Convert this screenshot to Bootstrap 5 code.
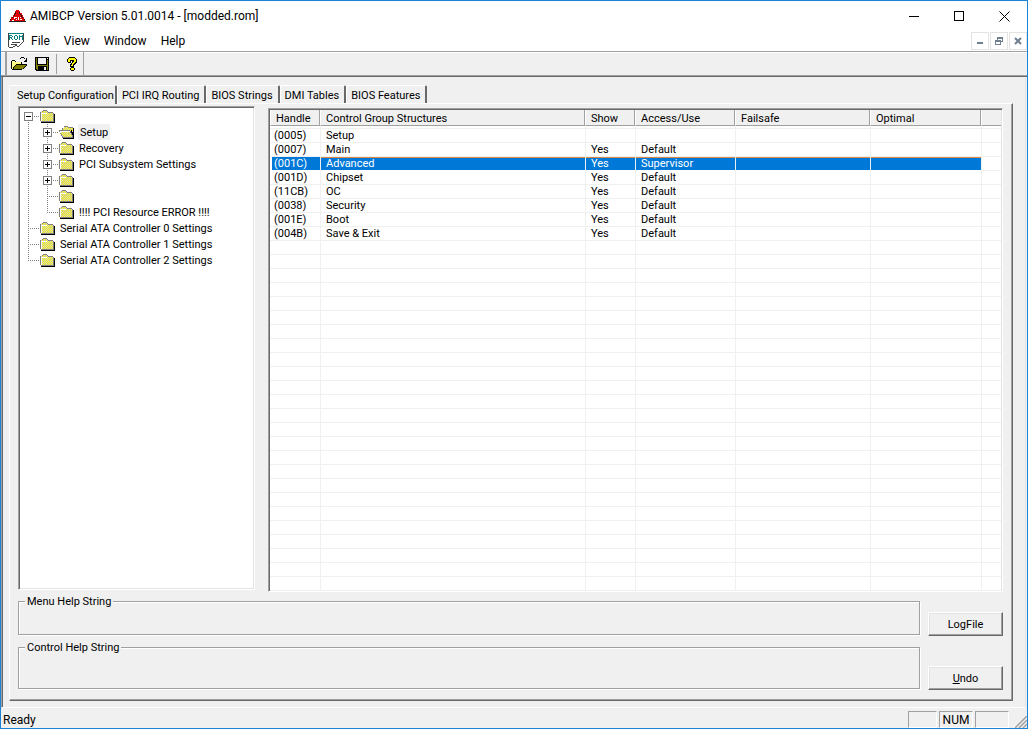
<!DOCTYPE html>
<html lang="en">
<head>
<meta charset="utf-8">
<meta name="viewport" content="width=device-width, initial-scale=1">
<title>AMIBCP Version 5.01.0014 - [modded.rom]</title>
<link href="https://cdn.jsdelivr.net/npm/bootstrap@5.3.0/dist/css/bootstrap.min.css" rel="stylesheet">
<style>
  :root { --face: #f0f0f0; --shade: #a0a0a0; --dark: #696969; --lite: #e3e3e3; --accent: #0078d7; }
  body { font: 11px/14px Roboto, "Liberation Sans", sans-serif; color: #000; background: var(--face); }
  button { font: inherit; color: inherit; }
  svg { display: block; flex: none; }
  .window { height: 100vh; border: 1px solid #1883d7; }
  .ui-text { font: 12px/16px Roboto, "Segoe UI", sans-serif; }

  .title-bar { height: 30px; background: #fff; padding-left: 8px; }
  .title-bar h1 { font: inherit; margin: 0 0 0 4px; }
  .caption-btn { width: 45px; height: 30px; border: 0; background: none; padding: 0; display: grid; place-items: center; }
  .menu-bar { height: 20px; background: #fff; padding-left: 7px; }
  .menu-bar .nav-link { color: #000; padding: 0 7px; }
  .child-btns { gap: 1px; }
  .child-btn { width: 18px; height: 18px; border: 1px solid var(--lite); background: #fff; padding: 0; display: grid; place-items: center; }
  .tool-bar { height: 26px; border-top: 1px solid var(--shade); border-bottom: 1px solid var(--dark); box-shadow: inset 0 1px #fff, inset 0 -1px var(--shade); padding-left: 4px; }
  .tool-group { height: 23px; border-left: 2px solid var(--shade); border-right: 1px solid var(--shade); vertical-align: top; }
  .tool-btn { width: 23px; height: 22px; border: 0; background: none; padding: 0; display: grid; place-items: center; }
  .tool-sep { width: 1px; height: 20px; background: var(--shade); margin: 0 3px; }

  .client { min-height: 0; margin-right: 1px; border-left: 1px solid var(--shade); border-right: 1px solid var(--lite); border-bottom: 1px solid #fff; box-shadow: inset 1px 0 var(--dark); padding: 8px 12px 6px 7px; }
  .sheet-tabs { border: 0; gap: 0; align-items: flex-end; }
  .sheet-tabs .nav-link { color: #000; border: 1px solid #fff; border-right: 2px solid var(--dark); border-bottom: 0; border-radius: 2px 2px 0 0; background: var(--face); height: 18px; padding: 3px 5px 0 4px; margin: 0; line-height: 14px; white-space: nowrap; }
  .sheet-tabs .nav-link.active { color: #000; background: var(--face); border-color: #fff var(--dark) #fff #fff; height: 19px; padding: 1px 1px 0 7px; margin-bottom: -1px; position: relative; }
  .sheet { border: 1px solid; border-color: #fff var(--dark) var(--dark) #fff; box-shadow: inset -1px -1px var(--shade); padding: 2px 9px 10px 8px; min-height: 0; }
  .panes { flex: 1 1 0; min-height: 0; gap: 13px; }
  .sunken { background: #fff; border: 1px solid; border-color: var(--shade) #fff #fff var(--shade); box-shadow: inset 1px 1px var(--dark), inset -1px -1px var(--lite); padding: 1px; min-height: 0; overflow: hidden; }
  .tree-pane { flex: 0 0 237px; margin-bottom: 2px; }
  .list-pane { flex: 1 1 0; margin-top: 2px; }
  .tree { margin: 0; padding: 0; list-style: none; }
  .node { display: flex; height: 16px; align-items: center; white-space: nowrap; }
  .node .folder { margin-left: 1px; }
  .node .name { margin-left: 3px; padding: 2px 2px 0; }
  .node .name.current { background: var(--face); }

  .groups { table-layout: fixed; width: 100%; margin: 0; border-collapse: separate; border-spacing: 0; line-height: 12px; }
  .groups th { font-weight: 400; height: 16px; padding: 3px 5px 0; background: var(--face); border: 0; border-right: 1px solid var(--shade); border-bottom: 1px solid var(--shade); border-left: 1px solid #fff; white-space: nowrap; }
  .groups th:last-child { border-right: 0; }
  .groups td { height: 14px; padding: 1px 5px 0; border: 0; border-bottom: 1px solid #f0f0f0; border-left: 1px solid #f0f0f0; white-space: nowrap; overflow: hidden; }
  .groups td:first-child { border-left: 0; padding: 1px 4px 0; }
  .groups .gap td { height: 3px; line-height: 2px; padding: 0; }
  .groups .chosen td:not(:last-child) { background: var(--accent); color: #fff; border-bottom-color: #fff; box-shadow: inset 0 1px #d98a48; }
  .groups .chosen td:first-child { background: linear-gradient(90deg, #fff 2px, var(--accent) 2px); box-shadow: none; }

  .lower { gap: 8px; }
  .help-stack { gap: 4px; padding: 1px 0; }
  .help-box { border: 1px solid var(--shade); box-shadow: 1px 1px #fff, inset 1px 1px #fff; margin: 0; padding: 0 6px; min-width: 0; }
  .help-box legend { float: none; width: auto; font: inherit; margin: 0; padding: 2px 2px 0; background: var(--face); }
  .box-menu { height: 42px; }
  .box-control { height: 50px; }
  .push-stack { padding-top: 20px; }
  .push { width: 75px; height: 24px; padding: 1px 0 0; background: var(--face); border: 1px solid; border-color: #fff var(--dark) var(--dark) #fff; box-shadow: inset -1px -1px var(--shade), inset 1px 1px var(--lite); }
  .status-bar { height: 20px; padding: 3px 0 0 2px; }
  .cell { width: 34px; height: 17px; border: 1px solid; border-color: var(--shade) #fff #fff var(--shade); margin-right: 2px; }
  .cell.short { width: 29px; }
</style>
</head>
<body>
<svg width="0" height="0" class="position-absolute" aria-hidden="true">
  <defs>
    <pattern id="dither" width="2" height="2" patternUnits="userSpaceOnUse"><path fill="#c8c8c8" d="M0 0h2v2H0z"/><path fill="#ff0" d="M0 0h1v1H0zM1 1h1v1H1z"/></pattern>
    <pattern id="dither-open" width="2" height="2" patternUnits="userSpaceOnUse"><path fill="#ff0" d="M0 0h2v2H0z"/><path fill="#c8c8c8" d="M0 0h1v1H0zM1 1h1v1H1z"/></pattern>
    <symbol id="folder" viewBox="0 0 15 13"><path fill="url(#dither)" d="M1 2h2V1h4v1h1v1h5v8H1z"/><path fill="#808080" d="M2 1h1V0h4v1h1v1h5v1H8V2H7V1H3v1H1v9H0V2h2zM1 11h12V3h1v9H1z"/><path fill="#fff" d="M1 3h6v1H2v7H1z"/><path d="M14 4h1v9H1v-1h13z"/></symbol>
    <symbol id="open" viewBox="0 0 16 13"><path fill="url(#dither-open)" d="M4 2h1V1h4v1h5v9H4zM1 5h11v2h1v2h1v2H3V9H2V7H1z"/><path fill="#808080" d="M5 0h4v1h5v1H9V1H5v1H4v2H3V2h2zM0 4h11v1h1v2h1v2h1v2h-1V9h-1V7h-1V5H1v1H0zM1 6h1v2H1zM2 8h1v2H2zM3 10h1v1h10v1H3z"/><path fill="#fff" d="M1 5h10v1H2v1H1z"/><path d="M14 2h1v11H4v-1h10zM12 4h1v2h1v3h-1V7h-1z"/></symbol>
    <symbol id="v" viewBox="0 0 19 16"><path fill="none" stroke="#808080" stroke-dasharray="1 1" d="M8.500 0v16"/></symbol>
    <symbol id="tee" viewBox="0 0 19 16"><path fill="none" stroke="#808080" stroke-dasharray="1 1" d="M8.500 0v16M8 8.500h11"/></symbol>
    <symbol id="ell" viewBox="0 0 19 16"><path fill="none" stroke="#808080" stroke-dasharray="1 1" d="M8.500 0v8M8 8.500h11"/></symbol>
    <symbol id="plus" viewBox="0 0 19 16"><path fill="none" stroke="#808080" stroke-dasharray="1 1" d="M8.500 0v16M8 8.500h11"/><path fill="#fff" stroke="#808080" d="M4.500 4.500h8v8h-8z"/><path d="M6 8h5v1H6zM8 6h1v5H8z"/></symbol>
    <symbol id="minus" viewBox="0 0 19 16"><path fill="none" stroke="#808080" stroke-dasharray="1 1" d="M8.500 12v4M12 8.500h7"/><path fill="#fff" stroke="#808080" d="M4.500 4.500h8v8h-8z"/><path d="M6 8h5v1H6z"/></symbol>
  </defs>
</svg>

<div class="window d-flex flex-column">
  <header>
    <div class="title-bar ui-text d-flex align-items-center">
      <svg width="17" height="14" viewBox="0 0 17 14" shape-rendering="crispEdges"><path fill="#e00000" d="M7 1h3v1h1v2h2v2h1v2h1v2h1v2H1v-2h1V8h2V6h1V4h1V2h1z"/><path fill="#222" d="M6 3h1v2H6zM5 5h1v2H5zM10 3h1v2h1v1h-1zM12 6h1v2h1v1h-1zM3 8h1v1H3zM0 12h17v1H0zM1 10h1v1H1zM15 10h1v1h-1z"/><path fill="#fff" d="M5 8h3v1H6v1H5zM9 8h1v3H9zM7 10h1v1H7zM3 11h2v1H3zM11 8h1v1h-1zM11 10h2v1h-2z"/></svg>
      <h1 class="me-auto text-nowrap">AMIBCP Version 5.01.0014 - [modded.rom]</h1>
      <button class="caption-btn" aria-label="Minimize"><svg width="11" height="11" shape-rendering="crispEdges"><path d="M0 5h10v1H0z"/></svg></button>
      <button class="caption-btn" aria-label="Maximize"><svg width="11" height="11" shape-rendering="crispEdges"><path fill="none" stroke="#000" d="M.5.5h9v9h-9z"/></svg></button>
      <button class="caption-btn" aria-label="Close"><svg width="11" height="11"><path fill="none" stroke="#000" d="M.5.5l10 10M10.500.5l-10 10"/></svg></button>
    </div>
    <nav class="menu-bar ui-text d-flex align-items-center" aria-label="Menu">
      <svg width="16" height="16" viewBox="0 0 16 16" shape-rendering="crispEdges"><path fill="#fff" d="M0 0h16v9l-4 5H0z"/><path fill="#008080" d="M0 0h16v1H0zM1 2h3v1H2v1h2v1H2v2H1zM4 3h1v1H4zM3 5h1v1H3zM4 6h1v1H4zM6 3h1v3H6zM7 2h2v1H7zM9 3h1v3H9zM7 6h2v1H7zM11 2h1v5h-1zM12 3h1v1h-1zM13 3h1v1h-1zM14 2h1v5h-1z"/><path fill="#444" d="M0 0h1v14H0zM15 0h1v9h-1zM4 9h8v1H4zM3 11h6v1H3zM14 9h1v1h-1zM13 10h1v1h-1zM12 11h1v1h-1zM11 12h1v1h-1zM9 13h2v1H9zM7 12h2v1H7zM5 13h2v1H5zM1 14h4v1H1z"/></svg>
      <div class="nav me-auto">
        <a class="nav-link" href="#">File</a><a class="nav-link" href="#">View</a><a class="nav-link" href="#">Window</a><a class="nav-link" href="#">Help</a>
      </div>
      <div class="child-btns d-flex">
        <button class="child-btn" aria-label="Minimize document"><svg width="8" height="8"><path fill="#708090" d="M1 5h6v2H1z"/></svg></button>
        <button class="child-btn" aria-label="Restore document"><svg width="8" height="8" shape-rendering="crispEdges"><path fill="none" stroke="#708090" d="M2.500 3V.5h5v4H6M.5 3.500h5v4h-5z"/><path fill="#708090" d="M2 0h6v2H2zM0 3h6v2H0z"/></svg></button>
        <button class="child-btn" aria-label="Close document"><svg width="8" height="8"><path fill="none" stroke="#708090" stroke-width="2" d="M1 1l6 6M7 1L1 7"/></svg></button>
      </div>
    </nav>
    <div class="tool-bar">
      <div class="tool-group d-inline-flex align-items-center">
        <button class="tool-btn" aria-label="Open"><svg width="16" height="14" viewBox="0 0 16 14" shape-rendering="crispEdges"><path fill="#ff8" d="M1 4h4v1h6v3H5v1H4v1H3v1H2v1H1z"/><path fill="#808000" d="M5 8h10v1h-1v1h-1v1h-1v1h-1v1H2v-1h1v-2h1V9h1z"/><path d="M1 3h3v1h1v1h6v3h-1V5H4V4H1v8H0V4h1zM5 7h11v1H5zM4 8h1v1H4zM3 9h1v1H3zM2 10h1v2H2zM1 12h10v1H1zM15 8h1v1h-1v1h-1V9h1zM13 10h1v1h-1zM12 11h1v1h-1zM9 1h1v1H9zM10 0h3v1h-3zM13 1h1v1h-1zM15 1h1v4h-3V4h1V3h1z"/></svg></button>
        <button class="tool-btn" aria-label="Save"><svg width="14" height="14" shape-rendering="crispEdges"><path d="M0 0h14v14H1v-1H0z"/><path fill="#808000" d="M1 1h1v11H1zM12 3h1v10h-1zM2 8h10v1H2zM2 9h1v4H2z"/><path fill="#f0f0f0" d="M3 1h8v6H3zM9 10h2v3H9zM12 1h1v1h-1z"/></svg></button>
        <span class="tool-sep"></span>
        <button class="tool-btn" aria-label="Help"><svg width="10" height="14" viewBox="0 0 10 14" shape-rendering="crispEdges"><path d="M2 0h6v1h1v1h1v4H9v1H8v1H7v2H3V7h1V6h1V4H4v2H1V5H0V2h1V1h1zM4 10h3v1h1v2H7v1H4v-1H3v-2h1z"/><path fill="#ff0" d="M2 1h6v1h1v3H8v1H7v1H6v2H4V8h1V6h1V5h1V3H3v2H1V2h1zM4 11h3v2H4z"/></svg></button>
      </div>
    </div>
  </header>

  <main class="client flex-grow-1 d-flex flex-column">
    <ul class="nav nav-tabs sheet-tabs" role="tablist">
      <li class="nav-item"><button class="nav-link active" role="tab" aria-selected="true">Setup Configuration</button></li>
      <li class="nav-item"><button class="nav-link" role="tab">PCI IRQ Routing</button></li>
      <li class="nav-item"><button class="nav-link" role="tab">BIOS Strings</button></li>
      <li class="nav-item"><button class="nav-link" role="tab">DMI Tables</button></li>
      <li class="nav-item"><button class="nav-link" role="tab">BIOS Features</button></li>
    </ul>
    <section class="sheet flex-grow-1 d-flex flex-column">
      <div class="panes d-flex">
        <div class="sunken tree-pane">
          <ul class="tree" id="tree"></ul>
        </div>
        <div class="sunken list-pane">
          <table class="groups">
            <colgroup><col style="width:50px"><col style="width:265px"><col style="width:50px"><col style="width:100px"><col style="width:135px"><col style="width:111px"><col></colgroup>
            <thead><tr><th>Handle</th><th>Control Group Structures</th><th>Show</th><th>Access/Use</th><th>Failsafe</th><th>Optimal</th><th></th></tr></thead>
            <tbody id="rows">
              <tr class="gap"><td></td><td></td><td></td><td></td><td></td><td></td><td></td></tr>
              <tr><td>(0005)</td><td>Setup</td><td></td><td></td><td></td><td></td><td></td></tr>
              <tr><td>(0007)</td><td>Main</td><td>Yes</td><td>Default</td><td></td><td></td><td></td></tr>
              <tr class="chosen"><td>(001C)</td><td>Advanced</td><td>Yes</td><td>Supervisor</td><td></td><td></td><td></td></tr>
              <tr><td>(001D)</td><td>Chipset</td><td>Yes</td><td>Default</td><td></td><td></td><td></td></tr>
              <tr><td>(11CB)</td><td>OC</td><td>Yes</td><td>Default</td><td></td><td></td><td></td></tr>
              <tr><td>(0038)</td><td>Security</td><td>Yes</td><td>Default</td><td></td><td></td><td></td></tr>
              <tr><td>(001E)</td><td>Boot</td><td>Yes</td><td>Default</td><td></td><td></td><td></td></tr>
              <tr><td>(004B)</td><td>Save &amp; Exit</td><td>Yes</td><td>Default</td><td></td><td></td><td></td></tr>
            </tbody>
          </table>
        </div>
      </div>
      <div class="lower d-flex">
        <div class="help-stack flex-grow-1 d-flex flex-column">
          <fieldset class="help-box box-menu"><legend>Menu Help String</legend></fieldset>
          <fieldset class="help-box box-control"><legend>Control Help String</legend></fieldset>
        </div>
        <div class="push-stack d-flex flex-column justify-content-between">
          <button class="push">LogFile</button>
          <button class="push"><u>U</u>ndo</button>
        </div>
      </div>
    </section>
  </main>

  <footer class="status-bar ui-text d-flex align-items-center">
    <span class="me-auto">Ready</span>
    <span class="cell short"></span>
    <span class="cell text-center">NUM</span>
    <span class="cell"></span>
    <svg class="align-self-end ms-1" width="12" height="12"><path stroke="#a0a0a0" stroke-width="1.500" d="M0 12L12 0M4 12l8-8M8 12l4-4"/></svg>
  </footer>
</div>

<script src="https://cdn.jsdelivr.net/npm/bootstrap@5.3.0/dist/js/bootstrap.bundle.min.js"></script>
<script>
  // Tree nodes: connector glyphs from the left, folder icon, label.
  const nodes = [
    [['minus'], 'folder', ''],
    [['v', 'plus'], 'open', 'Setup'],
    [['v', 'plus'], 'folder', 'Recovery'],
    [['v', 'plus'], 'folder', 'PCI Subsystem Settings'],
    [['v', 'plus'], 'folder', ''],
    [['v', 'tee'], 'folder', ''],
    [['v', 'ell'], 'folder', '!!!! PCI Resource ERROR !!!!'],
    [['tee'], 'folder', 'Serial ATA Controller 0 Settings'],
    [['tee'], 'folder', 'Serial ATA Controller 1 Settings'],
    [['ell'], 'folder', 'Serial ATA Controller 2 Settings']
  ];
  document.getElementById('tree').innerHTML = nodes.map(([lines, icon, name]) =>
    '<li class="node">' +
    lines.map(l => `<svg width="19" height="16" shape-rendering="crispEdges"><use href="#${l}"/></svg>`).join('') +
    `<svg class="folder" width="${icon === 'open' ? 16 : 15}" height="13" shape-rendering="crispEdges"><use href="#${icon}"/></svg>` +
    (name ? `<span class="name${icon === 'open' ? ' current' : ''}">${name}</span>` : '') + '</li>').join('');

  // Blank grid rows fill the rest of the list.
  document.getElementById('rows').insertAdjacentHTML('beforeend', ('<tr>' + '<td></td>'.repeat(7) + '</tr>').repeat(60));
</script>
</body>
</html>
